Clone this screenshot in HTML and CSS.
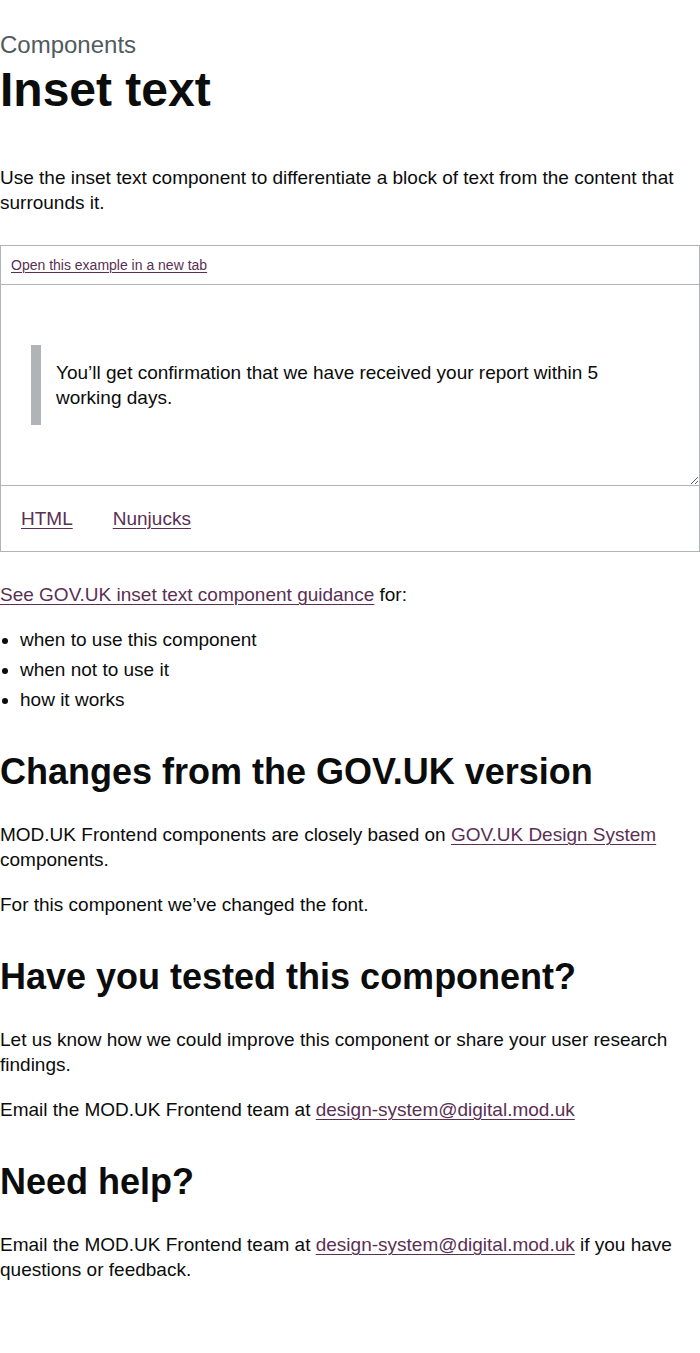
FILE: index.html
```html
<!DOCTYPE html>
<html lang="en">
<head>
<meta charset="utf-8">
<title>Inset text – Components</title>
<link rel="stylesheet" href="styles.css">
</head>
<body>
<main class="main">
  <span class="caption">Components</span>
  <h1 class="heading-xl">Inset text</h1>
  <p class="body lead">Use the inset text component to differentiate a block of text from the content that surrounds it.</p>

  <div class="example">
    <div class="example-bar">
      <a class="link" href="#">Open this example in a new tab</a>
    </div>
    <div class="example-frame">
      <div class="inset">You’ll get confirmation that we have received your report within 5 working days.</div>
    </div>
    <ul class="tabs">
      <li class="tab"><a class="link" href="#">HTML</a></li>
      <li class="tab"><a class="link" href="#">Nunjucks</a></li>
    </ul>
  </div>

  <p class="body"><a class="link" href="#">See GOV.UK inset text component guidance</a> for:</p>
  <ul class="bullets">
    <li>when to use this component</li>
    <li>when not to use it</li>
    <li>how it works</li>
  </ul>

  <h2 class="heading-l">Changes from the GOV.UK version</h2>
  <p class="body">MOD.UK Frontend components are closely based on <a class="link" href="#">GOV.UK Design System</a> components.</p>
  <p class="body">For this component we’ve changed the font.</p>

  <h2 class="heading-l">Have you tested this component?</h2>
  <p class="body">Let us know how we could improve this component or share your user research findings.</p>
  <p class="body">Email the MOD.UK Frontend team at <a class="link" href="#">design-system@digital.mod.uk</a></p>

  <h2 class="heading-l">Need help?</h2>
  <p class="body">Email the MOD.UK Frontend team at <a class="link" href="#">design-system@digital.mod.uk</a> if you have questions or feedback.</p>
</main>
<footer class="footer"></footer>
</body>
</html>
```

FILE: styles.css
```css
* { box-sizing: border-box; }

html, body {
  margin: 0;
  padding: 0;
  background: #ffffff;
}

body {
  font-family: "Liberation Sans", Arial, sans-serif;
  color: #0b0c0c;
  font-size: 19px;
  line-height: 25px;
}

.main {
  padding: 30px 0 51px;
}

.caption {
  display: block;
  font-size: 24px;
  line-height: 30px;
  color: #505a5f;
  margin-bottom: 5px;
}

.heading-xl {
  font-size: 48px;
  line-height: 50px;
  font-weight: 700;
  margin: 0 0 50px;
}

.heading-l {
  font-size: 36px;
  line-height: 40px;
  font-weight: 700;
  margin: 40px 0 30px;
}

.body {
  margin: 0 0 20px;
}

.lead {
  margin-bottom: 30px;
}

.link {
  color: #5a2f53;
  text-decoration: underline;
  text-decoration-thickness: 1px;
  text-underline-offset: 0.16em;
}

.example {
  border: 1px solid #b1b4b6;
  margin-bottom: 30px;
}

.example-bar {
  padding: 10px 10px;
  font-size: 14px;
  line-height: 18px;
  border-bottom: 1px solid #b1b4b6;
}

.example-frame {
  height: 201px;
  padding: 60px 30px 0;
  border-bottom: 1px solid #b1b4b6;
  resize: vertical;
  overflow: auto;
}

.inset {
  border-left: 10px solid #b1b4b6;
  padding: 15px;
  color: #0b0c0c;
}

.tabs {
  list-style: none;
  margin: 0;
  padding: 0;
  display: flex;
}

.tab {
  padding: 20px 20px;
  margin-right: 1px;
}

.tab:first-child {
  margin-right: 0;
}

.bullets {
  margin: 0 0 20px;
  padding-left: 20px;
  list-style: disc;
}

.bullets li {
  margin-bottom: 5px;
}

.bullets li:last-child {
  margin-bottom: 0;
}

.footer {
  border-top: 1px solid #b1b4b6;
  height: 80px;
  background: #ffffff;
}
```
